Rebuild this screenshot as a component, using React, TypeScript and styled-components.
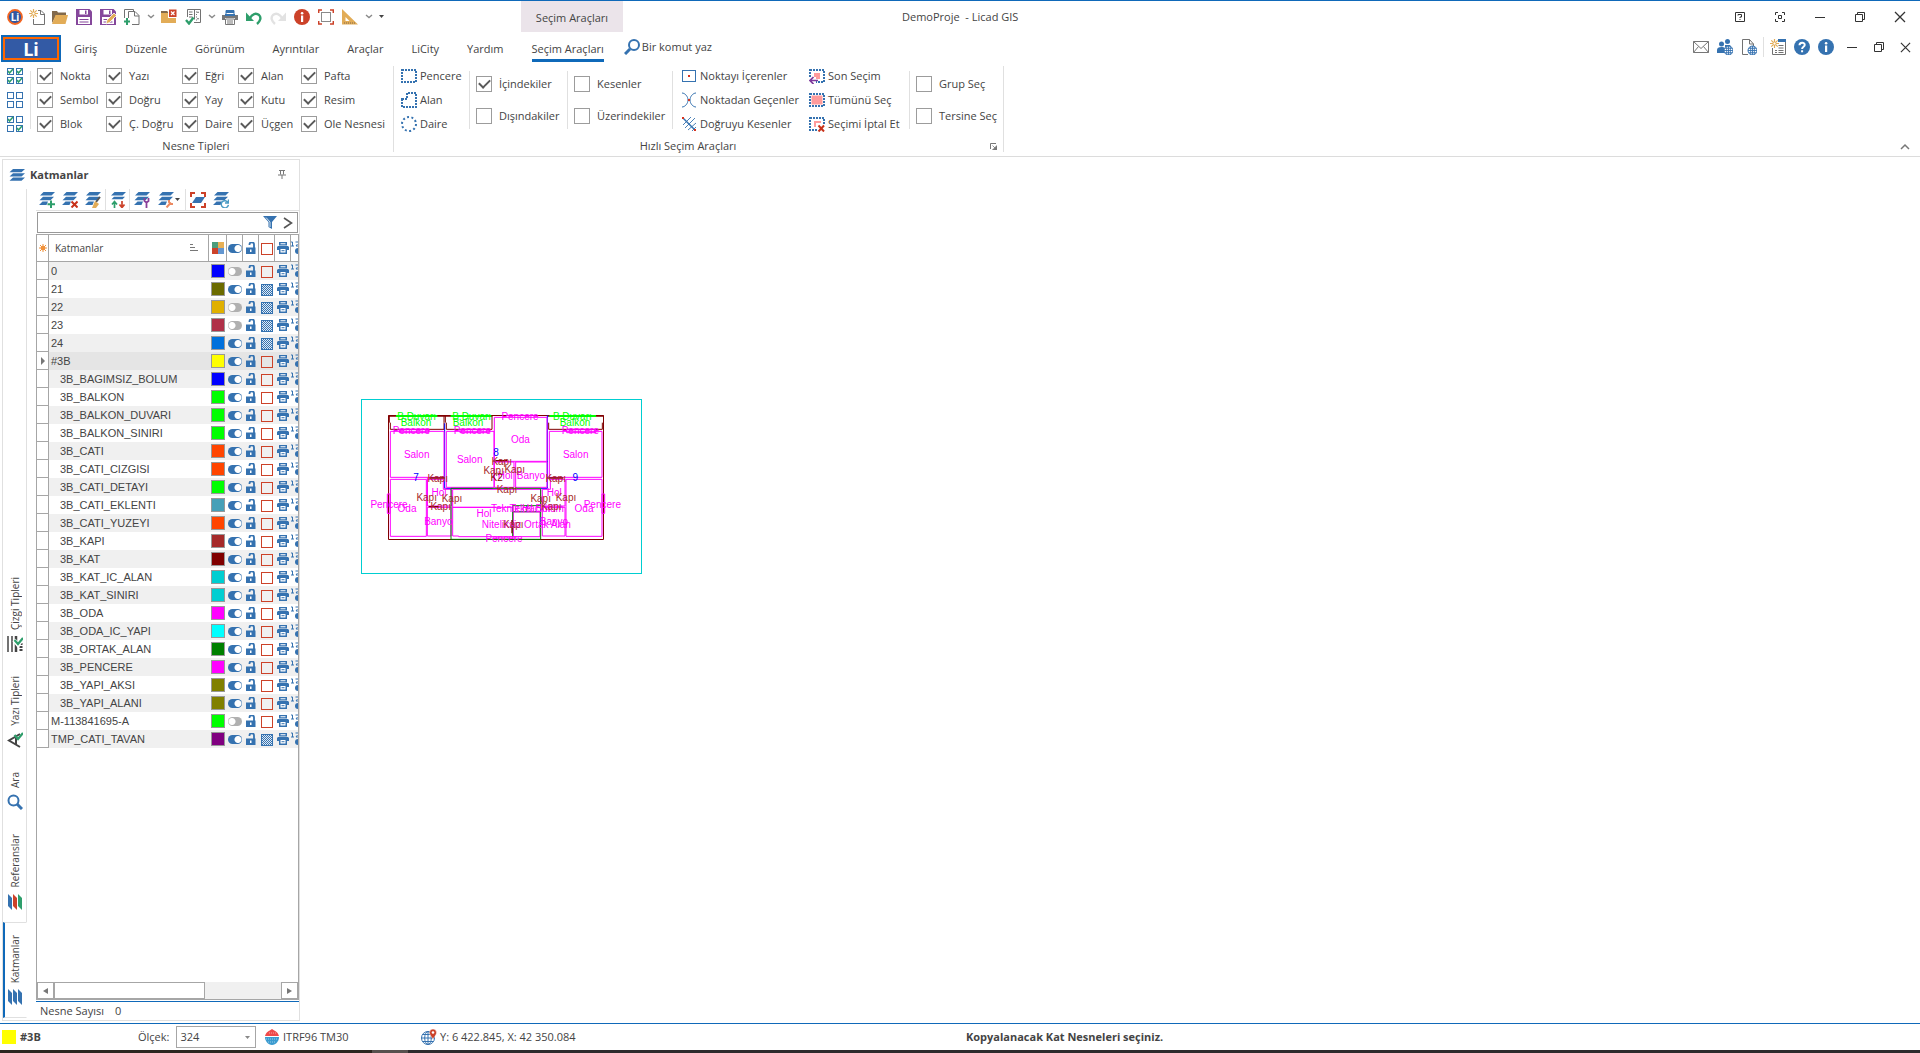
import React from "react";
import styled, { createGlobalStyle } from "styled-components";

const blue = "#3572b0";
const accent = "#0f69b9";
const line = "#e0e0e0";
const grid = "#a6a6a6";
const ink = "#444444";
const red = "#cc4229";
const green = "#2e9e6b";
const sand = "#e2ac57";
const purple = "#85479b";
const gray = "#727272";

const Global = createGlobalStyle`
  * { box-sizing: border-box; }
  html, body, #root { height: 100%; }
  body {
    margin: 0;
    background: #fff;
    color: ${ink};
    font: 11px/16px "Open Sans", "Noto Sans", sans-serif;
  }
  button, input, select { font: inherit; color: inherit; margin: 0; }
  button { border: 0; padding: 0; background: none; }
  svg { display: block; flex: none; }
`;

/* ---------- layout parts ---------- */

const Window = styled.div`
  min-height: 100%;
  display: flex;
  flex-direction: column;
  border-top: 1px solid ${accent};
`;

const TitleBar = styled.header`
  height: 31px;
  display: grid;
  grid-template-columns: 521px 102px 1fr 200px;
`;

const QuickAccess = styled.div`
  display: flex;
  align-items: center;
  padding-left: 4px;
`;

const QuickButton = styled.button<{ $w?: number }>`
  width: ${(p) => p.$w ?? 24}px;
  height: 24px;
  display: flex;
  align-items: center;
  justify-content: center;
`;

const ContextTab = styled.div`
  background: #ebe4ea;
  display: flex;
  align-items: center;
  justify-content: center;
  padding-top: 2px;
`;

const WindowTitle = styled.h1`
  margin: 0;
  font: inherit;
  align-self: center;
  white-space: pre;
  padding-left: 279px;
`;

const WindowButtons = styled.div`
  display: flex;
  align-items: center;
`;

const WindowButton = styled.button`
  flex: 1;
  height: 30px;
  display: flex;
  align-items: center;
  justify-content: center;
`;

const TabBar = styled.nav`
  height: 30px;
  display: flex;
  align-items: stretch;
  padding-left: 1px;
`;

const AppButton = styled.button`
  width: 60px;
  height: 27px;
  margin: 3px 13px 0 0;
  border: 2px solid ${accent};
  box-shadow: inset 0 0 0 2px #ff6600;
  background: #335aa5;
  color: #fff;
  font: bold 18px/20px "Open Sans", sans-serif;
`;

const Tabs = styled.div`
  display: flex;
  gap: 28px;
`;

const Tab = styled.button<{ $active?: boolean }>`
  padding-top: 6px;
  border-bottom: 3px solid ${(p) => (p.$active ? accent : "transparent")};
  white-space: nowrap;
`;

const CommandSearch = styled.label`
  display: flex;
  align-items: center;
  gap: 2px;
  margin-left: 20px;
`;

const CommandInput = styled.input`
  border: 0;
  outline: 0;
  padding: 0;
  width: 90px;
  background: none;
  &::placeholder { color: ${ink}; opacity: 1; }
`;

const TabBarEnd = styled.div`
  margin-left: auto;
  display: flex;
  align-items: center;
  padding-right: 1px;
`;

const BarButton = styled.button<{ $w?: number }>`
  width: ${(p) => p.$w ?? 24}px;
  height: 24px;
  display: flex;
  align-items: center;
  justify-content: center;
`;

const BarSeparator = styled.span`
  width: 1px;
  height: 20px;
  margin: 0 2px;
  background: ${line};
`;

const Ribbon = styled.section`
  display: flex;
  height: 95px;
  border-bottom: 1px solid #dcdcdc;
`;

const Group = styled.div<{ $w: number }>`
  width: ${(p) => p.$w}px;
  display: flex;
  flex-direction: column;
  padding: 2px 0 0 7px;
  position: relative;
`;

const GroupBody = styled.div`
  height: 72px;
  display: flex;
  align-items: center;
`;

const GroupCaption = styled.div<{ $end?: number }>`
  text-align: center;
  line-height: 20px;
  padding-right: ${(p) => p.$end ?? 8}px;
`;

const GroupEdge = styled.span`
  width: 1px;
  height: 86px;
  margin-top: 4px;
  background: ${line};
`;

const Launcher = styled.button`
  position: absolute;
  right: 6px;
  bottom: 6px;
`;

const Divider = styled.span`
  width: 1px;
  height: 58px;
  margin-right: 6px;
  background: ${line};
`;

const Stack = styled.div<{ $w: number; $row?: number; $start?: number }>`
  width: ${(p) => p.$w}px;
  padding-left: ${(p) => p.$start ?? 0}px;
  display: grid;
  grid-auto-rows: ${(p) => p.$row ?? 24}px;
  align-items: center;
  justify-items: start;
`;

const TypeGrid = styled.div`
  display: grid;
  grid-template-columns: 69px 76px 56px 63px 86px;
  grid-auto-rows: 24px;
  align-items: center;
`;

const Check = styled.label`
  display: flex;
  align-items: center;
  gap: 7px;
  white-space: nowrap;
`;

const CheckBox = styled.input`
  appearance: none;
  width: 16px;
  height: 16px;
  flex: none;
  border: 1px solid #9c9c9c;
  background: #fff;
  display: grid;
  place-items: center;
  &:checked::before {
    content: "";
    width: 9px;
    height: 5px;
    margin-top: -3px;
    border: solid #5a5a5a;
    border-width: 0 0 2px 2px;
    transform: rotate(-45deg);
  }
`;

const Command = styled.button`
  display: flex;
  align-items: center;
  gap: 3px;
  white-space: nowrap;
`;

const RibbonEnd = styled.div`
  margin-left: auto;
  display: flex;
  align-items: flex-end;
  padding: 0 10px 5px 0;
`;

const Workspace = styled.main`
  flex: 1;
  display: flex;
  padding: 2px 0 2px 2px;
`;

const Panel = styled.aside`
  width: 298px;
  border: 1px solid ${line};
  display: flex;
  flex-direction: column;
`;

const PanelHead = styled.div`
  height: 29px;
  display: flex;
  align-items: center;
  padding: 0 13px 0 6px;
  gap: 5px;
`;

const PanelTitle = styled.h2`
  margin: 0;
  flex: 1;
  font: bold 11px/16px "Open Sans", sans-serif;
`;

const PanelBody = styled.div`
  flex: 1;
  display: flex;
`;

const SideTabs = styled.div`
  width: 24px;
  display: flex;
  flex-direction: column;
  justify-content: flex-end;
  padding-bottom: 2px;
`;

const SideSpace = styled.div`
  flex: 1;
  border-right: 1px solid ${line};
`;

const SideTab = styled.button<{ $active?: boolean }>`
  display: flex;
  flex-direction: column;
  align-items: center;
  gap: 6px;
  padding: 12px 4px 12px 2px;
  border-right: 1px solid ${(p) => (p.$active ? "transparent" : line)};
  border-left: 2px solid ${(p) => (p.$active ? accent : "transparent")};
  border-top: ${(p) => (p.$active ? `1px solid ${line}` : "0")};
  border-bottom: ${(p) => (p.$active ? `1px solid ${line}` : "0")};
`;

const SideLabel = styled.span`
  writing-mode: vertical-rl;
  transform: rotate(180deg);
  font-size: 10px;
`;

const LayerPane = styled.div`
  flex: 1;
  min-width: 0;
  margin-left: 9px;
  display: flex;
  flex-direction: column;
`;

const Toolbar = styled.div`
  height: 22px;
  display: flex;
  align-items: center;
  border-bottom: 1px solid ${line};
`;

const ToolButton = styled.button<{ $w?: number }>`
  width: ${(p) => p.$w ?? 23}px;
  height: 20px;
  display: flex;
  align-items: center;
  justify-content: center;
  gap: 1px;
`;

const ToolSeparator = styled.span`
  width: 1px;
  height: 21px;
  background: ${line};
`;

const FilterRow = styled.label`
  height: 21px;
  margin: 1px 1px 1px 1px;
  border: 1px solid #999;
  display: flex;
  align-items: center;
  gap: 6px;
  padding-right: 4px;
`;

const FilterInput = styled.input`
  flex: 1;
  min-width: 0;
  border: 0;
  outline: 0;
  padding: 0 4px;
`;

const GridFrame = styled.div`
  flex: 1;
  border: 1px solid ${grid};
  display: flex;
  flex-direction: column;
  overflow: hidden;
`;

const Table = styled.table`
  width: 261px;
  table-layout: fixed;
  border-collapse: separate;
  border-spacing: 0;
  font: 11px/17px "Liberation Sans", Arial, sans-serif;
`;

const HeadCell = styled.th`
  height: 27px;
  padding: 0;
  font: 10px/16px "Open Sans", sans-serif;
  border-right: 1px solid ${grid};
  border-bottom: 1px solid ${grid};
  &:last-child { border-right: 0; }
`;

const HeadName = styled.div`
  display: flex;
  justify-content: space-between;
  align-items: center;
  padding: 0 10px 0 6px;
`;

const Row = styled.tr<{ $selected?: boolean }>`
  background: #fff;
  &:nth-child(odd) { background: #f0f0f0; }
  ${(p) => (p.$selected ? "&&& { background: #e5e5e5; }" : "")}
`;

const MarkCell = styled.td`
  height: 18px;
  padding: 0;
  background: #fff;
  border-right: 1px solid ${grid};
  border-bottom: 1px solid ${grid};
`;

const NameCell = styled.td<{ $child?: boolean }>`
  height: 18px;
  padding: 0 0 0 ${(p) => (p.$child ? 11 : 2)}px;
  white-space: nowrap;
  overflow: hidden;
`;

const IconCell = styled.td`
  height: 18px;
  padding: 0;
  overflow: hidden;
`;

const Center = styled.span`
  display: flex;
  justify-content: center;
  overflow: hidden;
`;

const Swatch = styled.button<{ $color: string }>`
  display: block;
  width: 14px;
  height: 14px;
  margin: 0 auto;
  border: 1px solid #999;
  background: ${(p) => p.$color};
`;

const Toggle = styled.input`
  appearance: none;
  display: block;
  width: 14px;
  height: 9px;
  margin: 1px auto 0;
  border-radius: 5px;
  background: radial-gradient(circle at 4px 50%, #fff 3px, transparent 4px) #b0b0b0;
  &:checked { background: radial-gradient(circle at 10px 50%, #fff 3px, transparent 4px) ${blue}; }
`;

const Fill = styled.input`
  appearance: none;
  display: block;
  width: 12px;
  height: 12px;
  margin: 1px auto 0;
  border: 1px solid ${red};
  &:checked {
    border-color: ${blue};
    background: repeating-conic-gradient(${blue} 0 25%, #dfeaf5 0 50%) 0 0 / 2px 2px;
  }
`;

const ScrollRow = styled.div`
  margin-top: auto;
  height: 17px;
  display: flex;
  background: #f0f0f0;
`;

const ScrollButton = styled.button`
  width: 17px;
  border: 1px solid ${grid};
  background: #fff;
  display: flex;
  align-items: center;
  justify-content: center;
`;

const ScrollThumb = styled.div`
  width: 58%;
  border: 1px solid ${grid};
  background: #fff;
  margin-right: auto;
`;

const PanelFoot = styled.div`
  height: 19px;
  margin-top: 1px;
  border-top: 1px solid ${accent};
  display: flex;
  gap: 11px;
  padding: 1px 4px;
`;

const Canvas = styled.section`
  flex: 1;
  padding: 231px 0 0 50px;
`;

const StatusBar = styled.footer`
  height: 27px;
  border-top: 1px solid ${accent};
  display: grid;
  grid-template-columns: 136px 127px 156px 366px 1fr;
  align-items: center;
  padding-left: 2px;
`;

const StatusItem = styled.div<{ $gap?: number }>`
  display: flex;
  align-items: center;
  gap: ${(p) => p.$gap ?? 4}px;
  white-space: nowrap;
`;

const ActiveColor = styled.span`
  width: 14px;
  height: 14px;
  background: #ffff00;
`;

const ScaleLabel = styled.label`
  display: flex;
  align-items: center;
  gap: 7px;
`;

const SelectBox = styled.span`
  position: relative;
  display: flex;
  align-items: center;
`;

const ScaleSelect = styled.select`
  appearance: none;
  width: 80px;
  height: 22px;
  padding: 0 3px;
  border: 1px solid #a6a6a6;
  border-radius: 0;
  background: #fff;
`;

const SelectArrow = styled.span`
  position: absolute;
  right: 6px;
  pointer-events: none;
`;

const Message = styled.strong`
  padding-left: 179px;
`;

const Taskbar = styled.div`
  height: 3px;
  background: linear-gradient(90deg, #2c2620 0 372px, #57514e 372px 408px, #2d2a2c 408px);
`;

/* ---------- icons ---------- */

type Kids = { children?: React.ReactNode; s?: number };
const I = ({ children, s = 16 }: Kids) => (
  <svg width={s} height={s} viewBox="0 0 16 16" fill="none" aria-hidden="true">{children}</svg>
);

const Star = () => (
  <g stroke={sand} strokeWidth="1.2">
    <path d="M4.500 0v9M0 4.500h9M1.300 1.300l6.400 6.400M7.700 1.300l-6.400 6.400" />
    <circle cx="4.500" cy="4.500" r="1.500" fill="#fff" strokeWidth=".8" />
  </g>
);
const Floppy = () => (
  <>
    <path d="M0 0h13.500L16 2.500V16H0z" fill={purple} />
    <path d="M3.500 1h8.500v4.500H3.500zM2 8h12v7H2z" fill="#fff" />
    <path d="M9 1.500h1.500V5H9z" fill={purple} />
    <path d="M3.500 10.500h9M3.500 13h9" stroke={purple} />
  </>
);
const Chevron = () => (
  <svg width="8" height="5" viewBox="0 0 8 5" fill="none"><path d="M1 1l3 2.500L7 1" stroke="#8a8a8a" strokeWidth="1.400" /></svg>
);
const Drop = ({ c = "#444" }: { c?: string }) => (
  <svg width="5" height="3" viewBox="0 0 5 3"><path d="M0 0h5L2.500 3z" fill={c} /></svg>
);
const Globe = () => (
  <g>
    <circle cx="11.500" cy="11.500" r="4.500" fill="#fff" stroke={blue} />
    <path d="M7 11.500h9M11.500 7v9M7.800 9.300h7.400M7.800 13.700h7.400M9.700 7.500v8M13.300 7.500v8" stroke={blue} strokeWidth=".9" />
  </g>
);
const Sheets = () => (
  <path d="M4 2h12l-3.500 3.200H.500zM4 6.300h12l-3.500 3.200H.500zM4 10.600h12l-3.500 3.200H.500z" fill={blue} />
);
const SheetsSmall = () => (
  <path d="M4.500 0H16l-3.500 3.500H1zM4 4.800h11L11.500 8.300H.500zM3.500 9.500H9L7.500 13H0z" fill={blue} />
);
const Printer = () => (
  <>
    <path d="M4 1h8v3H4z" fill={blue} />
    <path d="M4 1.500h8M4 5V1.500M12 5V1.500" stroke={blue} />
    <path d="M0 6h16v5h-3V9H3v2H0z" fill="#777" />
    <path d="M3 5h10v2H3z" fill={blue} />
    <path d="M3.500 10h9v5.500h-9z" fill="#fff" stroke="#777" />
    <path d="M5 12h6M5 14h6" stroke="#777" />
  </>
);
const Info = ({ c }: { c: string }) => (
  <>
    <circle cx="8" cy="8" r="8" fill={c} />
    <path d="M7 6.500h2.200V13H7z" fill="#fff" />
    <circle cx="8.100" cy="4.200" r="1.300" fill="#fff" />
  </>
);
const Lens = () => (
  <I>
    <circle cx="10" cy="6" r="5" stroke={blue} strokeWidth="2" />
    <path d="M6 10l-5 5" stroke={blue} strokeWidth="3" />
  </I>
);
const LensRight = () => (
  <I>
    <circle cx="6.500" cy="6.500" r="5" stroke={blue} strokeWidth="2" />
    <path d="M10 10l5 5" stroke={blue} strokeWidth="3" />
  </I>
);
const Tick = ({ x, y }: { x: number; y: number }) => (
  <path d={`M${x} ${y}l1.500 2 3.500-4`} stroke={green} strokeWidth="1.500" />
);
const Boxes = ({ ticks }: { ticks: number[] }) => (
  <I>
    {[[0, 0], [9, 0], [0, 9], [9, 9]].map(([x, y], i) => (
      <g key={i}>
        <rect x={x + 0.5} y={y + 0.5} width="6" height="6" stroke={blue} />
        {ticks.includes(i) && <Tick x={x + 1} y={y + 3} />}
      </g>
    ))}
  </I>
);

const quick: [string, number, React.ReactNode][] = [
  ["Licad", 22, <I key="i"><circle cx="8" cy="8" r="7" fill="#2f57a3" stroke="#f26522" strokeWidth="1.800" /><text x="8" y="11.500" textAnchor="middle" fontSize="10" fontWeight="700" fill="#fff" fontFamily="Open Sans">Li</text></I>],
  ["Yeni", 22, <I key="i"><path d="M9 1.500h3L15.500 5v10.500h-11V10M11.500 1.500v4h4" stroke={gray} /><Star /></I>],
  ["Aç", 24, <I key="i"><path d="M0 3V2h5l1 1.500h8V7H4L0 14z" fill="#82694a" /><path d="M3.500 6H16l-2.500 9H0z" fill={sand} /></I>],
  ["Kaydet", 24, <I key="i"><Floppy /></I>],
  ["Farklı kaydet", 24, <I key="i"><Floppy /><path d="M14 4l2.500 2.500-7 7L6 15l1-4z" fill={sand} stroke="#fff" strokeWidth=".8" /></I>],
  ["Ekle", 24, <I key="i"><path d="M.500 9V.500h9V2M4.500 9V2.500h6.500l4 4v9H8M10.500 2.500v4.500h4.500" stroke={gray} /><path d="M3 9v7M0 12.500h6" stroke={green} strokeWidth="2" /></I>],
  ["Ekle seçenekleri", 13, <Chevron key="i" />],
  ["Projeyi kapat", 24, <I key="i"><path d="M0 2h6l1.500 2H15v10H0z" fill={sand} /><path d="M0 2h6l1.500 2H0z" fill="#82694a" /><rect x="7.500" y="0" width="8.500" height="8.500" fill={red} stroke="#fff" /><path d="M10 2.500l3.500 3.500M13.500 2.500L10 6" stroke="#fff" strokeWidth="1.200" /></I>],
  ["Denetim", 24, <I key="i"><path d="M2.500 8V.500h13v13H9M9.500 .500v10" stroke={gray} /><path d="M4 3h3.500M4 5.500h3.500M4 8h3.500M11 3h1M11 5.500h1M11 8h1M11 11h1" stroke={gray} /><path d="M13 2l1 2h-2zM13 11l1-2h-2z" fill={gray} /><path d="M1 11l3 3.500 4.500-6" stroke={green} strokeWidth="2.400" /></I>],
  ["Denetim seçenekleri", 13, <Chevron key="i" />],
  ["Yazdır", 24, <I key="i"><Printer /></I>],
  ["Geri al", 24, <I key="i"><path d="M0 3.500L8 12H0z" fill={green} /><path d="M4 9c2-4 6-5.500 9-3 2.500 2.500 1.500 6-2 9" stroke={green} strokeWidth="2.400" /></I>],
  ["Yinele", 24, <I key="i"><path d="M16 3.500L8 12h8z" fill="#e2e2e2" /><path d="M12 9c-2-4-6-5.500-9-3-2.500 2.500-1.500 6 2 9" stroke="#e2e2e2" strokeWidth="2.400" /></I>],
  ["Bilgi", 24, <I key="i"><Info c={red} /></I>],
  ["Pencereye sığdır", 24, <I key="i"><path d="M.700 4V1H4M12 1h3.300v3M15.300 12v3H12M4 15H.700v-3" stroke={red} strokeWidth="1.500" /><rect x="3.500" y="3.500" width="9" height="9" stroke="#8a8a8a" /></I>],
  ["Ölçüm", 24, <I key="i"><path d="M0 0l16 15.500H0zM3.500 8v4h4z" fill={sand} fillRule="evenodd" /><path d="M2 14h11" stroke="#82694a" strokeDasharray="1 1" /></I>],
  ["Ölçüm seçenekleri", 13, <Chevron key="i" />],
  ["Özelleştir", 13, <Drop key="i" />],
];

const Restore = () => (
  <svg width="10" height="10" viewBox="0 0 10 10" fill="none" stroke="#333"><path d="M.500 2.500h7v7h-7zM2.500 2V.500h7v7H8" /></svg>
);
const Close = ({ s }: { s: number }) => (
  <svg width={s} height={s} viewBox="0 0 12 12" fill="none" stroke="#333" strokeWidth="1.300"><path d="M1 1l10 10M11 1L1 11" /></svg>
);
const Minimize = () => (
  <svg width="10" height="10" viewBox="0 0 10 10" fill="none" stroke="#333"><path d="M0 5.500h10" /></svg>
);

const windowButtons: [string, React.ReactNode][] = [
  ["Yardım", <svg key="i" width="10" height="10" viewBox="0 0 10 10" fill="none" stroke="#333"><path d="M.500 .500h9v9h-9zM3 3.500v-1h3.500V5H5v1M5 7v1" /></svg>],
  ["Odak", <svg key="i" width="10" height="10" viewBox="0 0 10 10" fill="none" stroke="#333"><path d="M.500 3V.500H3M7 .500h2.500V3M9.500 7v2.500H7M3 9.500H.500V7M3.500 3.500h3v3h-3z" /></svg>],
  ["Küçült", <Minimize key="i" />],
  ["Geri yükle", <Restore key="i" />],
  ["Kapat", <Close key="i" s={12} />],
];

const tabs = ["Giriş", "Düzenle", "Görünüm", "Ayrıntılar", "Araçlar", "LiCity", "Yardım", "Seçim Araçları"];

const types = [
  "Nokta", "Yazı", "Eğri", "Alan", "Pafta",
  "Sembol", "Doğru", "Yay", "Kutu", "Resim",
  "Blok", "Ç. Doğru", "Daire", "Üçgen", "Ole Nesnesi",
];

const dash = { stroke: blue, strokeWidth: 2, strokeDasharray: "2 1" };
const shapes: [string, React.ReactNode][] = [
  ["Pencere", <I key="i"><rect x="1" y="2" width="14" height="12" {...dash} /></I>],
  ["Alan", <I key="i"><path d="M1 7h5V1h9v14H1z" {...dash} /></I>],
  ["Daire", <I key="i"><circle cx="8" cy="8" r="7" stroke={blue} strokeWidth="2" strokeDasharray="2 2.400" /></I>],
];
const pointTools: [string, React.ReactNode][] = [
  ["Noktayı İçerenler", <I key="i"><rect x="1.500" y="2.500" width="13" height="11" stroke={blue} /><path d="M7 7h2v2H7z" fill="#d8321e" /></I>],
  ["Noktadan Geçenler", <I key="i"><path d="M1 1c3 0 6 3.500 6 7s-3 7-6 7M15 1c-3 0-6 3.500-6 7s3 7 6 7" stroke={blue} /><path d="M7 7h2v2H7z" fill="#d8321e" /></I>],
  ["Doğruyu Kesenler", <I key="i"><path d="M2 9L10 1M4 12L14 2M7 14l8-7M11 15l4-4" stroke={blue} strokeWidth=".900" /><path d="M2 2l12 12" stroke={blue} strokeWidth="1.500" /><path d="M1 1h2v2H1zM13 13h2v2h-2z" fill="#d8321e" /></I>],
];
const selectTools: [string, React.ReactNode][] = [
  ["Son Seçim", <I key="i"><rect x="1" y="2" width="14" height="12" {...dash} /><path d="M5 5h6v6H5z" fill="#ff9c9c" /><path d="M0 9h7v7H0z" fill="#fff" /><path d="M9 12.500H1.500M4.500 9l-3.500 3.500L4.500 16" stroke="#7e3a9c" strokeWidth="1.700" /></I>],
  ["Tümünü Seç", <I key="i"><rect x="1" y="2" width="14" height="12" {...dash} /><path d="M2.500 3.500h11v9h-11z" fill="#ff9c9c" /></I>],
  ["Seçimi İptal Et", <I key="i"><rect x="1" y="2" width="14" height="12" {...dash} /><path d="M6 11V6h6" stroke="#ff9c9c" strokeWidth="2" /><path d="M8 8h8v8H8z" fill="#fff" /><path d="M9.500 9.500l5.500 6M15 9.500l-5.500 6" stroke="#c8321a" strokeWidth="2" /></I>],
];

const layerTools: ([string, number, React.ReactNode] | null)[] = [
  ["Katman ekle", 22, <I key="i"><SheetsSmall /><path d="M12 8.500V16M8.500 12.200H16" stroke={green} strokeWidth="2" /></I>],
  ["Katman sil", 23, <I key="i"><SheetsSmall /><path d="M9.500 9.500l6 6M15.500 9.500l-6 6" stroke="#c8321a" strokeWidth="2" /></I>],
  ["Katmanı temizle", 24, <I key="i"><SheetsSmall /><path d="M15 5l-4 5" stroke="#555" strokeWidth="2" /><path d="M10 9l4 3-3 4H7z" fill={sand} /></I>],
  null,
  ["Sırala", 23, <I key="i"><path d="M4.500 0H16l-3.500 3.500H1zM4 4.800h11L12.500 7.300H1.500z" fill={blue} /><path d="M4.500 16V10M2 12.500l2.500-3 2.500 3" stroke={green} strokeWidth="1.700" /><path d="M12 9v6M9.500 12.500l2.500 3 2.500-3" stroke={red} strokeWidth="1.700" /></I>],
  null,
  ["Katman araçları", 23, <I key="i"><SheetsSmall /><path d="M12.500 16v-6M10.500 6v3l2 1.500 2-1.500V6" stroke="#8a3f9a" strokeWidth="1.800" /></I>],
  ["Katman ayarları", 32, <React.Fragment key="i"><I><SheetsSmall /><path d="M8.500 15.500l4-4.500M11 8v2l2 2h2" stroke="#ec8a62" strokeWidth="2" /></I><Drop /></React.Fragment>],
  null,
  ["Katmana odaklan", 23, <I key="i"><path d="M1 5V1h4M11 1h4v4M15 11v4h-4M5 15H1v-4" stroke={red} strokeWidth="2" /><path d="M6 5h9l-4 6H2z" fill={blue} /></I>],
  ["Yenile", 24, <I key="i"><SheetsSmall /><path d="M15 10.500A3.600 3.600 0 1 0 15.400 13M15.500 7.500v3.500H12" stroke="#4a9bc4" strokeWidth="1.400" /></I>],
];

const Lock = () => (
  <svg width="10" height="12" viewBox="0 0 10 12" fill="none">
    <path d="M3.500 3V2.500A2 2 0 0 1 8 2.500V6" stroke={blue} strokeWidth="1.800" />
    <path d="M0 5.500h9.500V12H0z" fill={blue} /><path d="M4 7.500h1.500V10H4z" fill="#fff" />
  </svg>
);
const MiniPrinter = () => (
  <svg width="12" height="12" viewBox="0 0 12 12">
    <path d="M2 0h8v3.500H2zM1 4h10l1 1v3h-2v4H2V8H0V5z" fill={blue} />
    <path d="M3.500 1.200h5v1h-5zM3.500 7h5v3.500h-5z" fill="#fff" /><path d="M4.500 8.200h3v1h-3z" fill={blue} />
  </svg>
);
const Twelve = () => (
  <svg width="7" height="14" viewBox="0 0 7 14">
    <path d="M0 1h1.500v4M0 5h3M4.500 1H7M5 5h2M6.500 3L5 5" stroke={blue} fill="none" />
    <circle cx="7" cy="10" r="3" fill={blue} />
  </svg>
);

/* ---------- data ---------- */

type Layer = [name: string, color: string, on?: boolean, filled?: boolean];
const layers: Layer[] = [
  ["0", "#0000ff", false, false],
  ["21", "#6b6b00", true, true],
  ["22", "#e0b000", false, true],
  ["23", "#b03048", false, true],
  ["24", "#0070dc", true, true],
  ["#3B", "#ffff00"],
  ["3B_BAGIMSIZ_BOLUM", "#0000ff"],
  ["3B_BALKON", "#00ff00"],
  ["3B_BALKON_DUVARI", "#00ff00"],
  ["3B_BALKON_SINIRI", "#00ff00"],
  ["3B_CATI", "#ff4500"],
  ["3B_CATI_CIZGISI", "#ff4500"],
  ["3B_CATI_DETAYI", "#00ff00"],
  ["3B_CATI_EKLENTI", "#46a0b8"],
  ["3B_CATI_YUZEYI", "#ff4500"],
  ["3B_KAPI", "#a52a2a"],
  ["3B_KAT", "#800000"],
  ["3B_KAT_IC_ALAN", "#00ced1"],
  ["3B_KAT_SINIRI", "#00ced1"],
  ["3B_ODA", "#ff00ff"],
  ["3B_ODA_IC_YAPI", "#00ffff"],
  ["3B_ORTAK_ALAN", "#008000"],
  ["3B_PENCERE", "#ff00ff"],
  ["3B_YAPI_AKSI", "#808000"],
  ["3B_YAPI_ALANI", "#808000"],
  ["M-113841695-A", "#00ff00", false, false],
  ["TMP_CATI_TAVAN", "#800080", true, true],
];

const magenta = "#ff00ff";
const brown = "#a52a2a";
const lime = "#00ff00";
type Mark = [text: string, x: number, y: number, color: string];
const marks: Mark[] = [
  ["7", 198, 273, "#0000ff"], ["8", 438, 197, "#0000ff"], ["9", 676, 273, "#0000ff"],
  ["B.Duvarı", 200, 90, lime], ["B.Duvarı", 365, 90, lime], ["B.Duvarı", 667, 90, lime],
  ["Balkon", 198, 108, lime], ["Balkon", 354, 108, lime], ["Balkon", 675, 108, lime],
  ["Pencere", 184, 132, magenta], ["Pencere", 367, 132, magenta], ["Pencere", 691, 132, magenta],
  ["Pencere", 510, 90, magenta], ["Pencere", 117, 354, magenta], ["Pencere", 757, 354, magenta],
  ["Pencere", 462, 456, magenta],
  ["Salon", 200, 204, magenta], ["Salon", 359, 219, magenta], ["Salon", 677, 204, magenta],
  ["Oda", 511, 159, magenta], ["Oda", 171, 367, magenta], ["Oda", 702, 367, magenta],
  ["Hol", 267, 318, magenta], ["Hol", 613, 318, magenta], ["Hol", 402, 381, magenta], ["Hol", 466, 267, magenta],
  ["Banyo", 265, 406, magenta], ["Banyo", 612, 406, magenta], ["Banyo", 543, 268, magenta],
  ["Teknik Hacim", 512, 367, magenta], ["Tekel Bölüm", 560, 367, magenta],
  ["Niteliksiz Ortak Alan", 529, 414, magenta],
  ["K2", 440, 273, "#800000"],
  ["Kapı", 263, 276, brown], ["Kapı", 230, 332, brown], ["Kapı", 306, 336, brown], ["Kapı", 272, 360, brown],
  ["Kapı", 455, 225, brown], ["Kapı", 431, 252, brown], ["Kapı", 494, 248, brown], ["Kapı", 471, 308, brown],
  ["Kapı", 490, 413, brown], ["Kapı", 617, 276, brown], ["Kapı", 572, 336, brown], ["Kapı", 648, 332, brown],
  ["Kapı", 604, 360, brown],
];

const FloorPlan = () => (
  <svg width="300" height="190" viewBox="0 0 900 570" fill="none" strokeWidth="3" role="img" aria-label="Kat planı">
    <rect x="34.500" y="28.500" width="840" height="522" stroke="#00ced1" />
    <path d="M115.500 76.500h645v372h-645z" stroke="#800000" />
    <path d="M115 78h312M593 78h168" stroke="#800000" strokeWidth="5" />
    <path d="M121 98v20h161V98M118 78v20M282 78v20M289 98v20h137V78M286 78v20M596 98v20h161V98" stroke="#800000" />
    <path d="M284 100v195h144M592 76v219h-20" stroke="#0000ff" />
    <g stroke={magenta}>
      <path d="M121 124h161v138H121zM289 124h143v168H289zM433 82h158v132H433zM598 124h158v138H598z" />
      <path d="M121 268h108v171H121zM232 262v86M232 268h48v30h24v50h-72zM232 352h71v86h-71z" />
      <path d="M433 216h59v76h-59zM497 216h94v76h-94z" />
      <path d="M308 298h264v50M308 352h130M308 298v140h18v2h244v-74h-80v74M308 352h180" />
      <path d="M577 298h24v-30h44v80h-68zM577 352h68v86h-68zM648 268h108v171H648z" />
      <path d="M112 312h8v58h-8zM756 312h8v58h-8zM148 118h88v10h-88zM330 118h88v10h-88zM650 118h88v10h-88zM470 76h90M430 444h70" />
    </g>
    <path d="M138 78h124M302 78h122M598 78h140" stroke={lime} strokeWidth="6" />
    <path d="M303 295h269v153H303zM488 347h84v18h-84zM488 347v92M530 347v18" stroke="#008000" />
    <path d="M436 212h36M240 264h44M596 264h44M236 350h30M486 390v40" stroke="#800000" strokeWidth="4" />
    <g strokeWidth="0" fontFamily="Liberation Sans, Arial, sans-serif" fontSize="30" textAnchor="middle">
      {marks.map(([text, x, y, color], i) => (
        <text key={i} x={x} y={y} fill={color}>{text}</text>
      ))}
    </g>
  </svg>
);

const sideTabs: [string, boolean, React.ReactNode][] = [
  ["Çizgi Tipleri", false, <I key="i"><path d="M1 0v16M5 0v16" stroke="#444" strokeWidth="1.500" /><path d="M9 0v16" stroke="#444" strokeWidth="2.500" /><path d="M14 4v12" stroke="#444" strokeWidth="3" strokeDasharray="2 1" /><path d="M7 4l4 5 5-7" stroke="#fff" strokeWidth="4" /><path d="M7.500 4l3.500 4 5-6" stroke={green} strokeWidth="2.200" /></I>],
  ["Yazı Tipleri", false, <I key="i"><path d="M13 2L2 8.500 13 15M9 5v7" stroke="#444" strokeWidth="2" /><path d="M7.500 3l3.500 4 5-6" stroke={green} strokeWidth="2.200" /></I>],
  ["Ara", false, <LensRight key="i" />],
  ["Referanslar", false, <I key="i"><path d="M1 0l4 4v12l-4-4z" fill={blue} /><path d="M6 0l4 4v12l-4-4z" fill={red} /><path d="M11 0l4 4v12l-4-4z" fill={green} /></I>],
  ["Katmanlar", true, <I key="i"><path d="M1 0l4 4v12l-4-4zM6 0l4 4v12l-4-4zM11 0l4 4v12l-4-4z" fill={blue} /></I>],
];

/* ---------- application ---------- */

const CheckItem = ({ text, on }: { text: string; on?: boolean }) => (
  <Check><CheckBox type="checkbox" defaultChecked={on} />{text}</Check>
);
const Commands = ({ items }: { items: [string, React.ReactNode][] }) => (
  <>{items.map(([text, icon]) => <Command key={text}>{icon}{text}</Command>)}</>
);

const LayerRow = ({ layer }: { layer: Layer }) => {
  const [name, color, on = true, filled = false] = layer;
  const selected = name === "#3B";
  return (
    <Row $selected={selected}>
      <MarkCell>{selected && <Center><svg width="4" height="8" viewBox="0 0 4 8"><path d="M0 0l4 4-4 4z" fill="#777" /></svg></Center>}</MarkCell>
      <NameCell $child={name.startsWith("3B_")}>{name}</NameCell>
      <IconCell><Swatch $color={color} aria-label={`${name} rengi`} /></IconCell>
      <IconCell><Toggle type="checkbox" defaultChecked={on} aria-label={`${name} görünür`} /></IconCell>
      <IconCell><Center><Lock /></Center></IconCell>
      <IconCell><Fill type="checkbox" defaultChecked={filled} aria-label={`${name} dolgu`} /></IconCell>
      <IconCell><Center><MiniPrinter /></Center></IconCell>
      <IconCell><Twelve /></IconCell>
    </Row>
  );
};

export default function App() {
  return (
    <>
      <Global />
      <Window>
        <TitleBar>
          <QuickAccess>
            {quick.map(([label, w, icon]) => (
              <QuickButton key={label} $w={w} aria-label={label}>{icon}</QuickButton>
            ))}
          </QuickAccess>
          <ContextTab>Seçim Araçları</ContextTab>
          <WindowTitle>DemoProje  - Licad GIS</WindowTitle>
          <WindowButtons>
            {windowButtons.map(([label, icon]) => (
              <WindowButton key={label} aria-label={label}>{icon}</WindowButton>
            ))}
          </WindowButtons>
        </TitleBar>

        <TabBar>
          <AppButton>Li</AppButton>
          <Tabs>
            {tabs.map((t) => <Tab key={t} $active={t === "Seçim Araçları"}>{t}</Tab>)}
          </Tabs>
          <CommandSearch>
            <Lens />
            <CommandInput placeholder="Bir komut yaz" aria-label="Bir komut yaz" />
          </CommandSearch>
          <TabBarEnd>
            <BarButton aria-label="Mesajlar"><I><path d="M.500 2.500h15v11H.500zM.500 2.500L8 9.500l7.500-7M.500 13.500l5-6M15.500 13.500l-5-6" stroke="#777" /></I></BarButton>
            <BarButton aria-label="Topluluk"><I><circle cx="10.500" cy="2.500" r="2.500" fill={blue} /><circle cx="4.500" cy="5" r="2.500" fill={blue} /><path d="M0 14V11c0-2 1.500-3 4.500-3s3 1 4 2v4zM8 6h5l2 3H8z" fill={blue} /><Globe /></I></BarButton>
            <BarButton aria-label="Çevrimiçi belge"><I><path d="M7 15.500H1.500V.500h7L12.500 5v2M8.500 .500V5h4" stroke={gray} /><Globe /></I></BarButton>
            <BarSeparator />
            <BarButton aria-label="Yenilikler"><I><path d="M9 1.500h6.500v14h-13V9" stroke={gray} /><path d="M8 0h8v3H8z" fill={blue} /><path d="M8.500 6.500h5M8.500 9h5M8.500 11.500h5M5 11.500h2M5 13.500h2M8.500 13.500h5" stroke={gray} /><Star /></I></BarButton>
            <BarButton aria-label="Yardım"><I><circle cx="8" cy="8" r="8" fill={blue} /><path d="M5.500 6.300C5.500 3 10.800 3 10.700 6c0 1.800-2.600 1.800-2.600 4M8.100 11.200v2" stroke="#fff" strokeWidth="2" /></I></BarButton>
            <BarButton aria-label="Hakkında"><I><Info c={blue} /></I></BarButton>
            <BarButton $w={27} aria-label="Belgeyi küçült"><Minimize /></BarButton>
            <BarButton $w={27} aria-label="Belgeyi geri yükle"><Restore /></BarButton>
            <BarButton $w={27} aria-label="Belgeyi kapat"><Close s={11} /></BarButton>
          </TabBarEnd>
        </TabBar>

        <Ribbon>
          <Group $w={393}>
            <GroupBody>
              <Stack $w={23}>
                <button aria-label="Tümünü işaretle"><Boxes ticks={[0, 1, 2, 3]} /></button>
                <button aria-label="İşaretleri kaldır"><Boxes ticks={[]} /></button>
                <button aria-label="İşaretleri ters çevir"><Boxes ticks={[0, 3]} /></button>
              </Stack>
              <Divider />
              <TypeGrid>
                {types.map((t) => <CheckItem key={t} text={t} on />)}
              </TypeGrid>
            </GroupBody>
            <GroupCaption>Nesne Tipleri</GroupCaption>
          </Group>
          <GroupEdge />
          <Group $w={609}>
            <GroupBody>
              <Stack $w={68}><Commands items={shapes} /></Stack>
              <Divider />
              <Stack $w={91} $row={32}>
                <CheckItem text="İçindekiler" on />
                <CheckItem text="Dışındakiler" />
              </Stack>
              <Divider />
              <Stack $w={98} $row={32}>
                <CheckItem text="Kesenler" />
                <CheckItem text="Üzerindekiler" />
              </Stack>
              <Divider />
              <Stack $w={130} $start={2}><Commands items={pointTools} /></Stack>
              <Stack $w={100}><Commands items={selectTools} /></Stack>
              <Divider />
              <Stack $w={86} $row={32}>
                <CheckItem text="Grup Seç" />
                <CheckItem text="Tersine Seç" />
              </Stack>
            </GroupBody>
            <GroupCaption $end={28}>Hızlı Seçim Araçları</GroupCaption>
            <Launcher aria-label="Seçim ayarları">
              <svg width="7" height="7" viewBox="0 0 7 7" fill="none"><path d="M.500 6V.500H6" stroke="#777" /><path d="M7 2.500V7H2.500zM2.500 2.500l3 3" fill="#777" stroke="#777" strokeWidth=".800" /></svg>
            </Launcher>
          </Group>
          <GroupEdge />
          <RibbonEnd>
            <button aria-label="Şeridi daralt">
              <svg width="10" height="8" viewBox="0 0 10 8" fill="none"><path d="M1 6l4-4 4 4" stroke="#777" strokeWidth="1.500" /></svg>
            </button>
          </RibbonEnd>
        </Ribbon>

        <Workspace>
          <Panel>
            <PanelHead>
              <I><Sheets /></I>
              <PanelTitle>Katmanlar</PanelTitle>
              <button aria-label="Sabitle">
                <svg width="8" height="9" viewBox="0 0 8 9" fill="none" stroke="#777"><path d="M1 .500h6M2.500 .500v4M5.500 .500v4M0 5h8M4 5v4" /></svg>
              </button>
            </PanelHead>
            <PanelBody>
              <SideTabs>
                <SideSpace />
                {sideTabs.map(([label, active, icon]) => (
                  <SideTab key={label} $active={active}><SideLabel>{label}</SideLabel>{icon}</SideTab>
                ))}
              </SideTabs>
              <LayerPane>
                <Toolbar>
                  {layerTools.map((t, i) =>
                    t ? <ToolButton key={i} $w={t[1]} aria-label={t[0]}>{t[2]}</ToolButton> : <ToolSeparator key={i} />
                  )}
                </Toolbar>
                <FilterRow>
                  <FilterInput aria-label="Katman filtresi" />
                  <svg width="14" height="13" viewBox="0 0 14 13" fill="none"><path d="M0 0h14L9 6v7L5.500 11V6z" fill={blue} /><path d="M3 1.500L7 6v5" stroke="#fff" strokeWidth=".800" /></svg>
                  <svg width="10" height="12" viewBox="0 0 10 12" fill="none"><path d="M1 1l7.500 5L1 11" stroke="#555" strokeWidth="1.600" /></svg>
                </FilterRow>
                <GridFrame>
                  <Table>
                    <colgroup>
                      <col style={{ width: 12 }} /><col style={{ width: 160 }} /><col style={{ width: 18 }} /><col style={{ width: 16 }} />
                      <col style={{ width: 16 }} /><col style={{ width: 16 }} /><col style={{ width: 16 }} /><col />
                    </colgroup>
                    <thead>
                      <tr>
                        <HeadCell><Center><svg width="8" height="8" viewBox="0 0 8 8"><path d="M4 0v8M0 4h8M1 1l6 6M7 1L1 7" stroke="#f0913a" /><circle cx="4" cy="4" r="2.300" fill="#f0913a" /></svg></Center></HeadCell>
                        <HeadCell><HeadName>Katmanlar<svg width="8" height="8" viewBox="0 0 8 8"><path d="M0 .500h3M0 3.500h5M0 6.500h8" stroke="#777" /></svg></HeadName></HeadCell>
                        <HeadCell><Center><svg width="12" height="12" viewBox="0 0 12 12"><path d="M0 0h6v6H0z" fill="#4a9c7c" /><path d="M6 0h6v6H6z" fill="#e8b055" /><path d="M0 6h6v6H0z" fill={red} /><path d="M6 6h6v6H6z" fill="#6396d0" /></svg></Center></HeadCell>
                        <HeadCell><Toggle type="checkbox" defaultChecked aria-label="Tümü görünür" /></HeadCell>
                        <HeadCell><Center><Lock /></Center></HeadCell>
                        <HeadCell><Fill type="checkbox" aria-label="Tümü dolgu" /></HeadCell>
                        <HeadCell><Center><MiniPrinter /></Center></HeadCell>
                        <HeadCell><Twelve /></HeadCell>
                      </tr>
                    </thead>
                    <tbody>
                      {layers.map((l) => <LayerRow key={l[0]} layer={l} />)}
                    </tbody>
                  </Table>
                  <ScrollRow>
                    <ScrollButton aria-label="Sola kaydır"><svg width="5" height="6" viewBox="0 0 5 6"><path d="M5 0v6L0 3z" fill="#777" /></svg></ScrollButton>
                    <ScrollThumb />
                    <ScrollButton aria-label="Sağa kaydır"><svg width="5" height="6" viewBox="0 0 5 6"><path d="M0 0v6l5-3z" fill="#777" /></svg></ScrollButton>
                  </ScrollRow>
                </GridFrame>
                <PanelFoot><span>Nesne Sayısı</span><span>0</span></PanelFoot>
              </LayerPane>
            </PanelBody>
          </Panel>
          <Canvas><FloorPlan /></Canvas>
        </Workspace>

        <StatusBar>
          <StatusItem><ActiveColor /><strong>#3B</strong></StatusItem>
          <ScaleLabel>
            Ölçek:
            <SelectBox>
              <ScaleSelect defaultValue="324"><option>324</option></ScaleSelect>
              <SelectArrow><Drop c="#888" /></SelectArrow>
            </SelectBox>
          </ScaleLabel>
          <StatusItem>
            <svg width="14" height="16" viewBox="0 0 14 16" fill="none"><path d="M0 8h14c0 4-3 8-7 8S0 12 0 8z" fill="#3a9bd0" /><path d="M0 7c1-4 4-5 7-7 3 2 6 3 7 7z" fill="#f04a4a" /><path d="M1 10h12M3 13h8M4 4h7" stroke="#fff" strokeWidth=".500" strokeDasharray="1 1" /></svg>
            ITRF96 TM30
          </StatusItem>
          <StatusItem $gap={3}>
            <I><circle cx="7" cy="9" r="6.500" stroke={blue} /><path d="M.500 9h13M7 2.500v13M1.500 5.500h11M1.500 12.500h11" stroke={blue} /><ellipse cx="7" cy="9" rx="3.300" ry="6.500" stroke={blue} /><path d="M12 10C9 6 8.500 5 8.500 3.500a3.500 3.500 0 0 1 7 0C15.500 5 15 6 12 10z" fill={red} stroke="#fff" strokeWidth=".500" /><circle cx="12" cy="3.500" r="1.300" fill="#fff" /></I>
            Y: 6 422.845, X: 42 350.084
          </StatusItem>
          <Message>Kopyalanacak Kat Nesneleri seçiniz.</Message>
        </StatusBar>
        <Taskbar />
      </Window>
    </>
  );
}
